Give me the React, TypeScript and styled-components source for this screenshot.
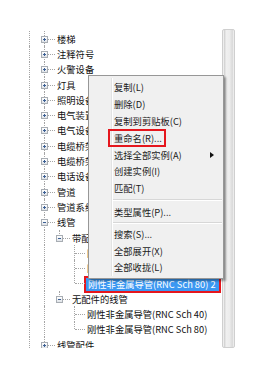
import React from "react";
import styled, { createGlobalStyle } from "styled-components";

const GlobalStyle = createGlobalStyle`
  html, body {
    margin: 0;
    padding: 0;
    background: #ffffff;
  }
  body {
    font-family: "Noto Sans CJK SC", "Noto Sans", sans-serif;
    font-size: 9.3px;
    color: #111;
  }
`;

const ROW_H = 15.3;
const CELL_W = 15;

const Page = styled.div`
  position: relative;
  width: 267px;
  height: 377px;
  overflow: hidden;
  background: #fff;
`;

const Panel = styled.div`
  display: flex;
  margin: 29px 0 0 22px;
  width: 213px;
  height: 319px;
`;

const Tree = styled.div`
  flex: 1;
  padding-top: 2px;
  overflow: hidden;
`;

const Row = styled.div`
  display: flex;
  align-items: center;
  height: ${ROW_H}px;
  white-space: nowrap;
`;

const Guide = styled.div<{ $on: boolean }>`
  position: relative;
  flex: none;
  width: ${CELL_W}px;
  align-self: stretch;
  &::before {
    content: "";
    display: ${({ $on }) => ($on ? "block" : "none")};
    position: absolute;
    left: 7px;
    top: 0;
    bottom: 0;
    border-left: 1px dotted #a5a5a5;
  }
`;

const Connector = styled.div<{ $down: boolean }>`
  position: relative;
  flex: none;
  width: 20px;
  align-self: stretch;
  &::before {
    content: "";
    position: absolute;
    left: 7px;
    top: 0;
    height: ${({ $down }) => ($down ? "100%" : "50%")};
    border-left: 1px dotted #a5a5a5;
  }
  &::after {
    content: "";
    position: absolute;
    left: 8px;
    width: 10px;
    top: 50%;
    border-top: 1px dotted #a5a5a5;
  }
`;

const Expander = styled.span<{ $open: boolean }>`
  position: absolute;
  z-index: 1;
  left: 4px;
  top: calc(50% - 3px);
  width: 7px;
  height: 7px;
  box-sizing: border-box;
  border: 1px solid #a8adb3;
  background: linear-gradient(#ffffff, #dfe3e8);
  &::before,
  &::after {
    content: "";
    position: absolute;
    background: #3b5f94;
  }
  &::before {
    left: 1px;
    top: 2px;
    width: 3px;
    height: 1px;
  }
  &::after {
    display: ${({ $open }) => ($open ? "none" : "block")};
    left: 2px;
    top: 1px;
    width: 1px;
    height: 3px;
  }
`;

const Label = styled.span<{ $selected?: boolean }>`
  color: ${({ $selected }) => ($selected ? "#fff" : "#111")};
  ${({ $selected }) =>
    $selected &&
    `
    display: inline-flex;
    align-items: center;
    height: 17px;
    box-sizing: border-box;
    margin: 2px 0 0 -3px;
    padding: 0 3px 0 2px;
    border: 2px solid #e5161d;
    background: #3c98f2;
  `}
`;

const Scrollbar = styled.div`
  flex: none;
  width: 13px;
  box-sizing: border-box;
  border: 1px solid #cfcfcf;
  border-radius: 2px;
  background: linear-gradient(
    to right,
    #ffffff 0,
    #d2d2d2 12%,
    #f0f0f0 30%,
    #ececec 60%,
    #d9d9d9 85%,
    #f4f4f4 100%
  );
`;

const Menu = styled.div`
  position: absolute;
  left: 88px;
  top: 75px;
  width: 136px;
  box-sizing: border-box;
  padding: 3px 0 2px;
  border: 1px solid #979797;
  background: #f0f0f0;
  box-shadow: 2px 2px 2px rgba(0, 0, 0, 0.35);
  &::before {
    content: "";
    position: absolute;
    left: 22px;
    top: 2px;
    bottom: 2px;
    width: 1px;
    background: #e2e3e3;
    border-right: 1px solid #fff;
  }
`;

const Item = styled.div`
  position: relative;
  display: flex;
  align-items: center;
  height: 16.8px;
  padding-left: 25px;
  color: #1b1b1b;
  white-space: nowrap;
`;

const ItemText = styled.span<{ $boxed?: boolean }>`
  ${({ $boxed }) =>
    $boxed &&
    `
    display: inline-flex;
    align-items: center;
    height: 18px;
    box-sizing: border-box;
    margin-left: -6px;
    padding: 0 2px 0 4px;
    border: 2px solid #e5161d;
  `}
`;

const SubArrow = styled.span`
  margin-left: auto;
  margin-right: 9px;
  width: 0;
  height: 0;
  border-left: 4px solid #111;
  border-top: 3px solid transparent;
  border-bottom: 3px solid transparent;
`;

const Separator = styled.div<{ $h: number }>`
  position: relative;
  height: ${({ $h }) => $h}px;
  &::after {
    content: "";
    position: absolute;
    left: 24px;
    right: 1px;
    top: calc(50% - 1px);
    height: 1px;
    background: #d7d7d7;
    border-bottom: 1px solid #fff;
  }
`;

type Node = {
  label: string;
  guides: boolean[];
  down: boolean;
  kids?: "open" | "closed";
  selected?: boolean;
};

const top = (label: string): Node => ({
  label,
  guides: [true],
  down: true,
  kids: "closed",
});
const leaf = (label: string, down: boolean, selected = false): Node => ({
  label,
  guides: [true, true, false],
  down,
  selected,
});

const rows: Node[] = [
  top("楼梯"),
  top("注释符号"),
  top("火警设备"),
  top("灯具"),
  top("照明设备"),
  top("电气装置"),
  top("电气设备"),
  top("电缆桥架"),
  top("电缆桥架配件"),
  top("电话设备"),
  top("管道"),
  top("管道系统"),
  { label: "线管", guides: [true], down: true, kids: "open" },
  { label: "带配件的线管", guides: [true, true], down: false, kids: "open" },
  leaf("刚性非金属导管(RNC Sch 40)", true),
  leaf("刚性非金属导管(RNC Sch 80)", true),
  leaf("刚性非金属导管(RNC Sch 80) 2", false, true),
  { label: "无配件的线管", guides: [true, true], down: false, kids: "open" },
  leaf("刚性非金属导管(RNC Sch 40)", true),
  leaf("刚性非金属导管(RNC Sch 80)", false),
  top("线管配件"),
];

type MenuEntry =
  | { text: string; boxed?: boolean; sub?: boolean }
  | { sep: number };

const menu: MenuEntry[] = [
  { text: "复制(L)" },
  { text: "删除(D)" },
  { text: "复制到剪贴板(C)" },
  { text: "重命名(R)...", boxed: true },
  { text: "选择全部实例(A)", sub: true },
  { text: "创建实例(I)" },
  { text: "匹配(T)" },
  { sep: 7 },
  { text: "类型属性(P)..." },
  { sep: 5 },
  { text: "搜索(S)..." },
  { text: "全部展开(X)" },
  { text: "全部收拢(L)" },
];

export default function App() {
  return (
    <Page>
      <GlobalStyle />
      <Panel>
        <Tree>
          {rows.map((r, i) => (
            <Row key={i}>
              {r.guides.map((g, j) => (
                <Guide key={j} $on={g} />
              ))}
              <Connector $down={r.down}>
                {r.kids && <Expander $open={r.kids === "open"} />}
              </Connector>
              <Label $selected={r.selected}>{r.label}</Label>
            </Row>
          ))}
        </Tree>
        <Scrollbar />
      </Panel>

      <Menu>
        {menu.map((m, i) =>
          "sep" in m ? (
            <Separator key={i} $h={m.sep} />
          ) : (
            <Item key={i}>
              <ItemText $boxed={m.boxed}>{m.text}</ItemText>
              {m.sub && <SubArrow />}
            </Item>
          )
        )}
      </Menu>
    </Page>
  );
}
